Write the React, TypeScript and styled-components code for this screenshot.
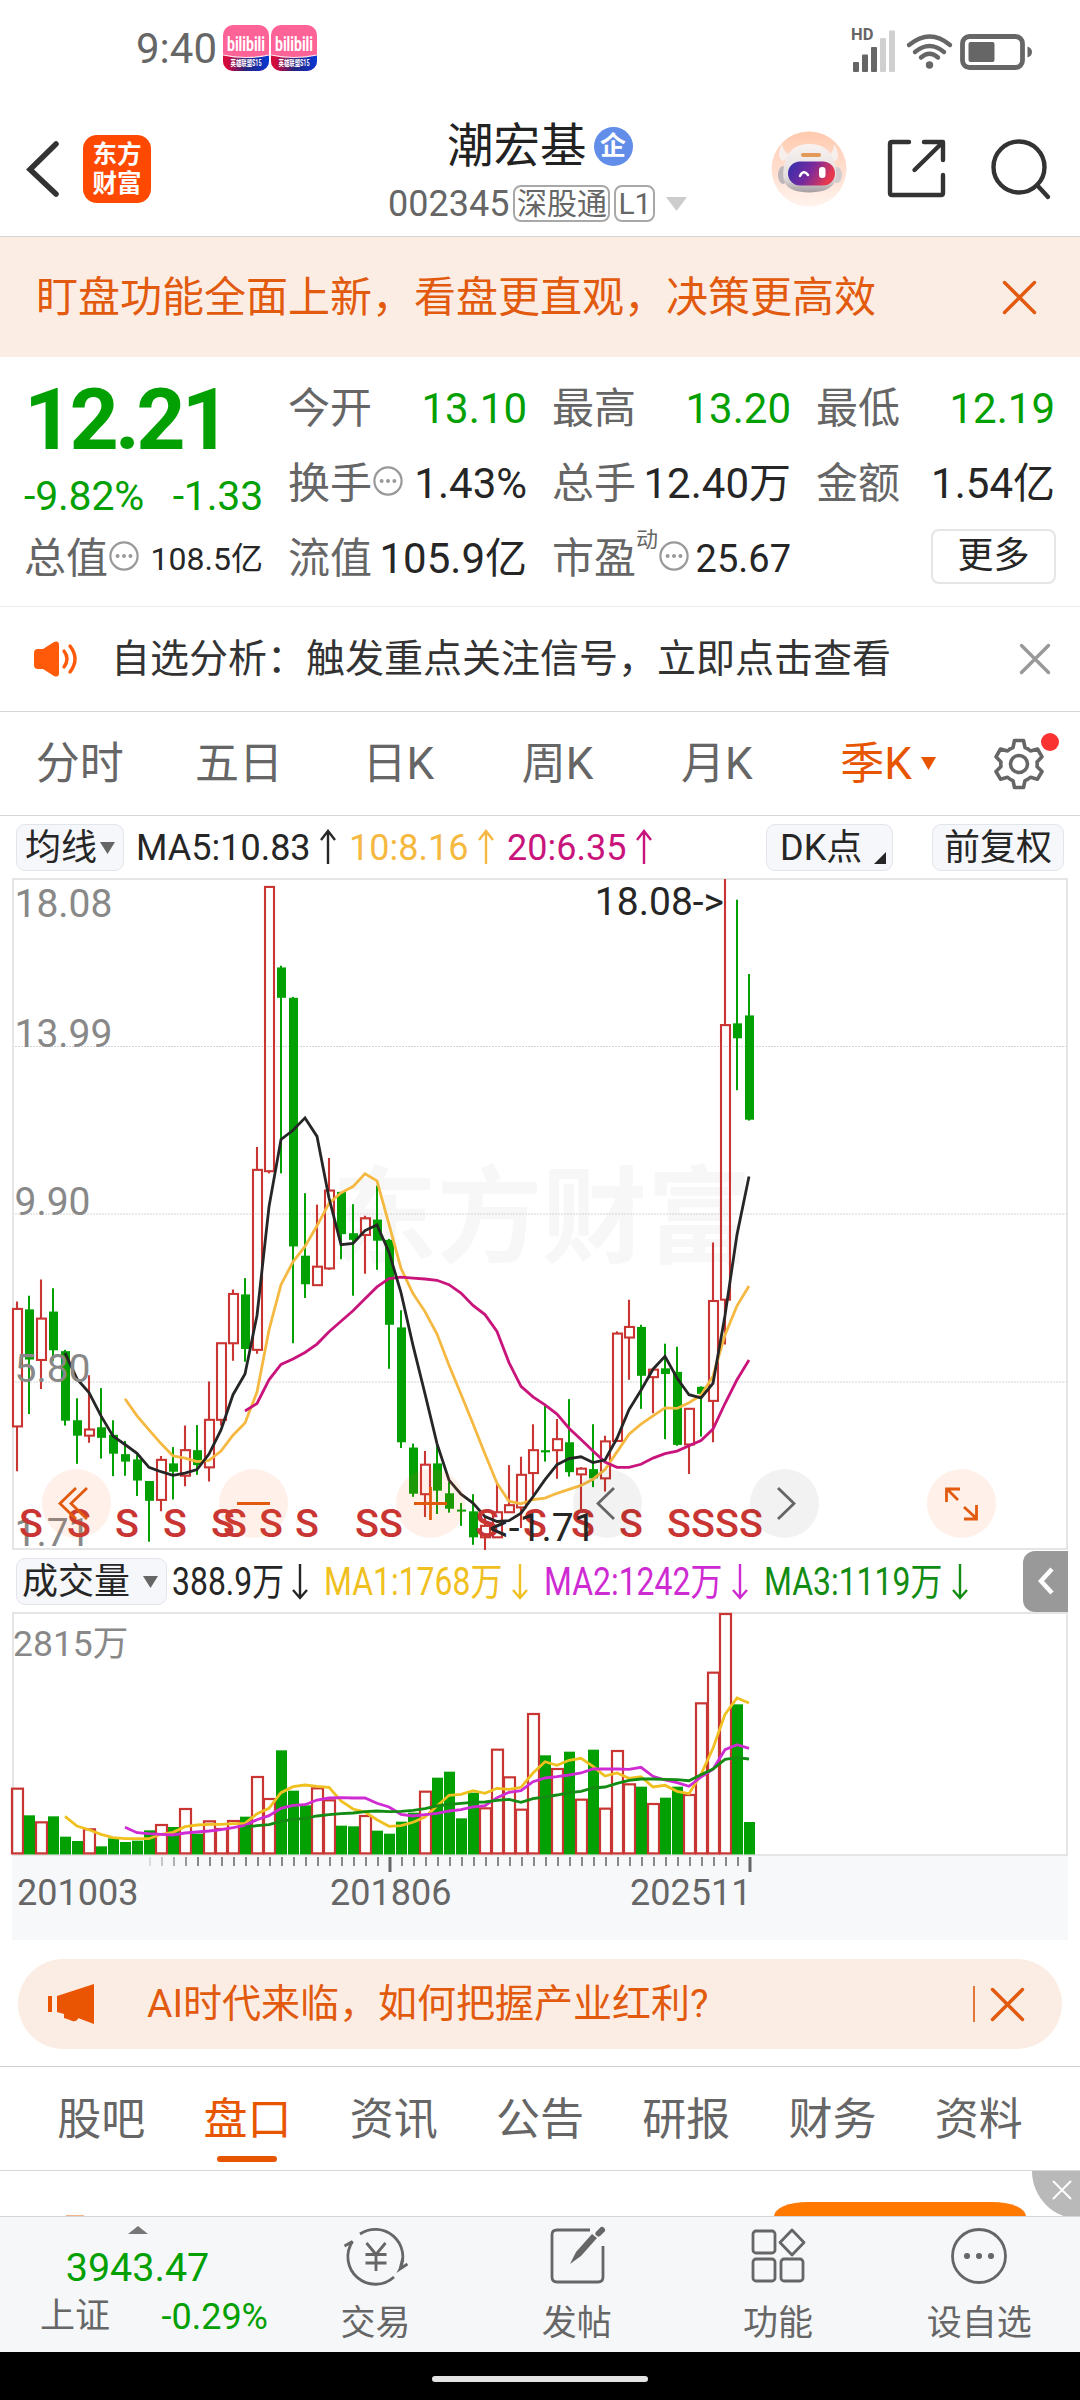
import type { ReactNode } from 'react';
import styled, { createGlobalStyle } from 'styled-components';

const UP = '#c83532';
const DOWN = '#02a002';
const ORANGE = '#e25a0e';

const GlobalStyle = createGlobalStyle`
  * {
    box-sizing: border-box;
  }

  body {
    margin: 0;
    background: #ffffff;
    font-family: Roboto, 'Noto Sans CJK SC', sans-serif;
    line-height: 1;
    color: #222222;
  }

  svg {
    display: block;
    flex-shrink: 0;
    overflow: visible;
  }
`;

type Candle = [dir: 'u' | 'd', high: number, top: number, bottom: number, low: number];

// offsets are chart ticks counted downwards, 20 is the session high
const candles: Candle[] = [
  ['u', 980, 997, 1264, 1366], ['d', 967, 998, 1112, 1236], ['u', 930, 1019, 1113, 1179],
  ['d', 950, 1003, 1091, 1115], ['d', 1090, 1093, 1251, 1262], ['d', 1200, 1250, 1285, 1349],
  ['u', 1148, 1271, 1285, 1301], ['d', 1177, 1266, 1290, 1337], ['d', 1250, 1283, 1326, 1377],
  ['d', 1297, 1327, 1344, 1376], ['d', 1328, 1339, 1387, 1422], ['d', 1388, 1388, 1433, 1526],
  ['u', 1331, 1340, 1431, 1457], ['d', 1311, 1348, 1367, 1430], ['u', 1262, 1318, 1376, 1400],
  ['d', 1261, 1318, 1352, 1374], ['u', 1162, 1249, 1357, 1389], ['u', 1075, 1075, 1249, 1262],
  ['u', 953, 963, 1075, 1115], ['d', 927, 964, 1088, 1117], ['u', 629, 681, 1090, 1099],
  ['u', 38, 38, 684, 689], ['d', 217, 221, 290, 689], ['d', 288, 290, 855, 1075],
  ['d', 734, 876, 941, 972], ['u', 760, 901, 943, 943], ['u', 654, 728, 905, 908],
  ['d', 731, 731, 827, 884], ['d', 759, 825, 840, 967], ['u', 785, 791, 829, 917],
  ['d', 717, 794, 842, 908], ['d', 838, 840, 1033, 1133], ['d', 1000, 1039, 1300, 1313],
  ['d', 1303, 1312, 1417, 1424], ['u', 1320, 1351, 1418, 1470], ['d', 1305, 1348, 1410, 1463],
  ['d', 1390, 1416, 1451, 1460], ['d', 1438, 1453, 1457, 1490], ['d', 1418, 1457, 1516, 1533],
  ['u', 1470, 1490, 1516, 1545], ['u', 1390, 1459, 1516, 1516], ['u', 1352, 1443, 1459, 1459],
  ['u', 1333, 1374, 1448, 1495], ['u', 1259, 1318, 1370, 1420], ['d', 1213, 1318, 1323, 1344],
  ['u', 1247, 1293, 1318, 1383], ['d', 1202, 1300, 1368, 1378], ['u', 1357, 1360, 1373, 1455],
  ['d', 1259, 1361, 1382, 1402], ['u', 1285, 1298, 1382, 1412], ['u', 1048, 1053, 1297, 1297],
  ['u', 976, 1038, 1062, 1158], ['d', 1033, 1038, 1149, 1224], ['u', 1135, 1135, 1152, 1234],
  ['d', 1076, 1132, 1145, 1293], ['d', 1083, 1140, 1306, 1308], ['u', 1224, 1224, 1305, 1372],
  ['d', 1173, 1174, 1190, 1287], ['u', 846, 979, 1206, 1300], ['u', 20, 352, 976, 1078],
  ['d', 67, 348, 382, 500], ['d', 236, 330, 567, 569],
];

const priceAverages = [
  {
    color: '#f5b942', start: 9,
    values: [1201, 1240, 1272, 1303, 1331, 1336, 1344, 1341, 1320, 1284, 1256, 1186, 1045, 942, 890, 855, 808, 757, 733, 719, 690, 706, 805, 905, 962, 1003, 1054, 1125, 1191, 1258, 1327, 1393, 1434, 1440, 1430, 1427, 1416, 1407, 1398, 1384, 1362, 1322, 1282, 1259, 1240, 1222, 1223, 1210, 1193, 1150, 1056, 990, 945],
  },
  {
    color: '#c9147c', start: 19,
    values: [1229, 1212, 1158, 1123, 1111, 1096, 1077, 1049, 1025, 1001, 974, 947, 928, 925, 927, 929, 932, 942, 961, 989, 1010, 1048, 1119, 1173, 1197, 1215, 1236, 1268, 1294, 1320, 1345, 1357, 1357, 1350, 1336, 1326, 1320, 1308, 1296, 1270, 1212, 1158, 1113],
  },
  {
    color: '#262626', start: 4,
    values: [1097, 1156, 1187, 1240, 1286, 1305, 1325, 1357, 1367, 1375, 1370, 1362, 1327, 1272, 1192, 1145, 1012, 765, 612, 591, 563, 605, 745, 851, 848, 819, 806, 868, 960, 1080, 1190, 1303, 1386, 1418, 1438, 1469, 1480, 1478, 1461, 1424, 1385, 1351, 1337, 1333, 1346, 1340, 1291, 1226, 1182, 1134, 1105, 1154, 1192, 1199, 1166, 1012, 828, 696],
  },
];

const volumeTops = [
  745, 825, 846, 828, 889, 902, 867, 918, 894, 905, 901, 870, 854, 860, 806, 880, 843, 866, 842, 829, 710,
  776, 630, 751, 795, 744, 780, 856, 858, 827, 871, 880, 844, 817, 754, 712, 694, 834, 757, 804, 628, 711,
  808, 521, 645, 686, 634, 778, 628, 805, 632, 732, 739, 791, 772, 739, 764, 489, 397, 221, 492, 845,
];

const volumeAverages = [
  {
    color: '#f0c020', start: 4,
    values: [828, 857, 868, 882, 892, 895, 895, 895, 882, 876, 859, 854, 852, 852, 850, 849, 820, 804, 757, 739, 734, 738, 741, 782, 806, 815, 838, 858, 856, 846, 830, 797, 765, 762, 751, 759, 744, 747, 741, 698, 664, 675, 660, 654, 678, 707, 698, 714, 709, 740, 735, 753, 760, 702, 624, 522, 473, 488],
  },
  {
    color: '#cf2bd3', start: 9,
    values: [861, 877, 880, 882, 884, 878, 875, 872, 868, 862, 855, 838, 826, 804, 795, 793, 779, 773, 772, 773, 773, 789, 800, 822, 827, 823, 819, 812, 808, 800, 796, 772, 756, 751, 724, 713, 709, 704, 698, 686, 686, 686, 687, 681, 708, 719, 727, 738, 710, 687, 628, 613, 624],
  },
  {
    color: '#128c12', start: 19,
    values: [860, 856, 853, 843, 837, 834, 827, 823, 820, 818, 814, 812, 814, 813, 810, 805, 797, 792, 789, 786, 785, 780, 777, 786, 775, 770, 764, 757, 753, 743, 740, 729, 720, 716, 716, 717, 718, 721, 703, 686, 657, 652, 656],
  },
];

const sellMarks = [31, 79, 127, 175, 223, 235, 271, 307, 367, 391, 487, 535, 583, 631, 679, 703, 727, 751];

const priceY = (v: number) => (v - 20) / 2.2725 + 1;
const volumeY = (v: number) => (v - 218) / 3 + 1;
const centerX = (i: number) => 5 + i * 12;
const linePath = (start: number, values: number[], y: (v: number) => number) =>
  values.map((v, i) => `${i ? 'L' : 'M'}${centerX(start + i)} ${y(v).toFixed(1)}`).join('');

const volumeFalls = (i: number) => candles[i][0] === 'd' && i !== 57;

function PriceChart() {
  return (
    <svg width="1056" height="672" viewBox="0 0 1056 672">
      <text x="530" y="376" fontSize="105" fontWeight="700" fill="#f7f7f7" textAnchor="middle">
        东方财富
      </text>
      {[168.5, 336, 504].map((y) => (
        <line key={y} x1="0" x2="1056" y1={y} y2={y} stroke="#d4d4d4" strokeWidth="1" strokeDasharray="2 1" />
      ))}
      <rect x="1" y="1" width="1054" height="670" fill="none" stroke="#e3e3e3" strokeWidth="1.8" />
      {candles.map(([dir, high, top, bottom, low], i) => {
        const x = centerX(i);
        const t = priceY(top);
        const b = priceY(bottom);
        if (dir === 'd') {
          return (
            <g key={i} fill={DOWN}>
              <rect x={x - 1} y={priceY(high)} width="2" height={priceY(low) - priceY(high)} />
              <rect x={x - 4} y={t} width="9" height={Math.max(b - t, 2)} />
            </g>
          );
        }
        return (
          <g key={i} fill="none" stroke={UP} strokeWidth="2.1">
            <path d={`M${x} ${priceY(high)}V${t}M${x} ${b}V${priceY(low)}`} />
            <rect x={x - 4} y={t} width="9" height={b - t} />
          </g>
        );
      })}
      {priceAverages.map((ma) => (
        <path key={ma.color} d={linePath(ma.start, ma.values, priceY)} fill="none" stroke={ma.color} strokeWidth="2.8" />
      ))}
      <g fontSize="39" fill="#888888">
        <text x="2.5" y="39">18.08</text>
        <text x="2.5" y="169">13.99</text>
        <text x="2.5" y="336.5">9.90</text>
        <text x="2.5" y="504">5.80</text>
        <text x="2.5" y="668">1.71</text>
      </g>
      <g fontSize="39.5" fontWeight="500" fill={UP} textAnchor="middle">
        {sellMarks.map((x) => (
          <text key={x} x={x - 12} y="659">S</text>
        ))}
      </g>
      <g fontSize="39" fill="#262626">
        <text x="712" y="36.5" textAnchor="end">18.08-&gt;</text>
        <text x="477" y="663">&lt;-1.71</text>
      </g>
    </svg>
  );
}

function VolumeChart() {
  const ticks = Array.from({ length: 51 }, (_, i) => 138 + i * 12);
  return (
    <svg width="1056" height="328" viewBox="0 0 1056 328">
      <rect x="0" y="244" width="1056" height="84" fill="#f7f8fa" />
      <rect x="1" y="1" width="1054" height="242" fill="none" stroke="#e3e3e3" strokeWidth="1.8" />
      {volumeTops.map((top, i) => {
        const y = volumeY(top);
        return volumeFalls(i) ? (
          <rect key={i} x={i * 12} y={y} width="11" height={242.4 - y} fill={DOWN} />
        ) : (
          <rect key={i} x={i * 12} y={y} width="11" height={241.4 - y} fill="none" stroke={UP} strokeWidth="2.2" />
        );
      })}
      {volumeAverages.map((ma) => (
        <path key={ma.color} d={linePath(ma.start, ma.values, volumeY)} fill="none" stroke={ma.color} strokeWidth="2.8" />
      ))}
      {ticks.map((x, i) => {
        const major = x === 378 || x === 738;
        return (
          <rect
            key={x}
            x={major ? x - 1.5 : x - 1}
            y="245"
            width={major ? 3 : 2}
            height={major ? 15 : 9}
            fill={major ? '#666666' : '#888888'}
            opacity={Math.min(1, 0.25 + i * 0.2)}
          />
        );
      })}
      <text x="1" y="44" fontSize="35.5" fill="#888888">2815万</text>
      <g fontSize="36" fill="#666666">
        <text x="5" y="293">201003</text>
        <text x="318" y="293">201806</text>
        <text x="618" y="293">202511</text>
      </g>
    </svg>
  );
}

function CloseIcon({ size, color, stroke = 3.4 }: { size: number; color: string; stroke?: number }) {
  return (
    <svg width={size} height={size} viewBox={`0 0 ${size} ${size}`}>
      <path d={`M1.5 1.5L${size - 1.5} ${size - 1.5}M${size - 1.5} 1.5L1.5 ${size - 1.5}`} stroke={color} strokeWidth={stroke} strokeLinecap="round" />
    </svg>
  );
}

function InfoDots() {
  return (
    <svg width="30" height="30" viewBox="0 0 30 30">
      <circle cx="15" cy="15" r="13.6" fill="none" stroke="#999999" strokeWidth="2.2" />
      <g fill="#999999">
        <circle cx="8.6" cy="15" r="2" />
        <circle cx="15" cy="15" r="2" />
        <circle cx="21.4" cy="15" r="2" />
      </g>
    </svg>
  );
}

function Caret({ width, height, color, up }: { width: number; height: number; color: string; up?: boolean }) {
  return (
    <svg width={width} height={height} viewBox="0 0 10 10" preserveAspectRatio="none">
      <path d={up ? 'M0 10H10L5 0Z' : 'M0 0H10L5 10Z'} fill={color} />
    </svg>
  );
}

function TrendArrow({ down, color }: { down?: boolean; color: string }) {
  return (
    <svg width="18" height="36" viewBox="0 0 18 36">
      <path
        d={down ? 'M9 0V34M2 26L9 34L16 26' : 'M9 34V1M2 10L9 1L16 10'}
        fill="none"
        stroke={color}
        strokeWidth="2.4"
      />
    </svg>
  );
}

function StatusIcons() {
  return (
    <svg width="182" height="48" viewBox="0 0 182 48">
      <text x="1" y="16" fontSize="16.5" fontWeight="700" fill="#666666">HD</text>
      <g fill="#666666">
        <rect x="3" y="38" width="6" height="10" rx="1" />
        <rect x="12" y="30.5" width="6" height="17.5" rx="1" />
        <rect x="21" y="23" width="6" height="25" rx="1" />
      </g>
      <g fill="#d0d0d0">
        <rect x="30" y="14" width="6" height="34" rx="1" />
        <rect x="39" y="6.5" width="6" height="41.5" rx="1" />
      </g>
      <g fill="none" stroke="#666666" strokeWidth="4.4" strokeLinecap="round">
        <path d="M59 21Q80 4 100 21" />
        <path d="M65 28Q79.5 16 94 28" />
        <path d="M71 33.5Q79.5 26 88 33.5" />
      </g>
      <circle cx="79.5" cy="41" r="3.7" fill="#666666" />
      <rect x="112.5" y="12.5" width="60" height="31" rx="7" fill="none" stroke="#666666" strokeWidth="4.8" />
      <rect x="118.5" y="18" width="26" height="20" rx="2" fill="#666666" />
      <path d="M177.5 22.5Q182 24 182 28Q182 32 177.5 33.5Z" fill="#666666" />
    </svg>
  );
}

function RobotAvatar() {
  return (
    <svg width="76" height="76" viewBox="0 0 76 76">
      <defs>
        <linearGradient id="halo" x1="0" y1="0" x2="0" y2="1">
          <stop offset="0" stopColor="#ffc9ae" />
          <stop offset="1" stopColor="#fff3ed" />
        </linearGradient>
        <linearGradient id="visor" x1="0" y1="0" x2="1" y2="0.3">
          <stop offset="0" stopColor="#2f2fb0" />
          <stop offset="0.55" stopColor="#7a2a9c" />
          <stop offset="1" stopColor="#e8384f" />
        </linearGradient>
        <linearGradient id="shell" x1="0" y1="0" x2="0" y2="1">
          <stop offset="0" stopColor="#f8f3f1" />
          <stop offset="0.7" stopColor="#e3dddd" />
          <stop offset="1" stopColor="#a59da1" />
        </linearGradient>
      </defs>
      <circle cx="38" cy="38" r="37.5" fill="url(#halo)" />
      <path d="M11 13Q5 24 11 30L22 26Q13 23 11 13ZM63 13Q70 24 65 30L54 26Q63 23 63 13Z" fill="#f7efec" />
      <ellipse cx="12" cy="44" rx="5" ry="9" fill="#bdb6ba" />
      <ellipse cx="66" cy="44" rx="5" ry="8" fill="#d3cccf" />
      <path d="M38 13C52 13 61 19 64 34C68 51 63 61 38 61.5C14 61 10 51 13 35C15 20 25 13 38 13Z" fill="url(#shell)" />
      <rect x="30" y="22" width="20" height="4" rx="2" fill="#e39a58" />
      <rect x="17" y="30.5" width="47" height="24" rx="12" fill="url(#visor)" />
      <path d="M29 45Q32.5 38 37 44" fill="none" stroke="#ffffff" strokeWidth="2.5" strokeLinecap="round" />
      <rect x="48" y="36" width="6.5" height="11" rx="3" fill="#ffffff" />
    </svg>
  );
}

function VideoAppIcon({ id }: { id: string }) {
  return (
    <svg width="46" height="46" viewBox="0 0 46 46">
      <defs>
        <linearGradient id={id} x1="0" x2="1">
          <stop offset="0.1" stopColor="#d30a3c" />
          <stop offset="0.5" stopColor="#27247c" />
          <stop offset="1" stopColor="#0638d6" />
        </linearGradient>
      </defs>
      <rect width="46" height="46" rx="10" fill="#fd6397" />
      <path d="M0 30Q23 35 46 30V36A10 10 0 0 1 36 46H10A10 10 0 0 1 0 36Z" fill={`url(#${id})`} />
      <path d="M0 30Q23 35 46 30" fill="none" stroke="#ffe1ec" strokeWidth="1.2" />
      <text x="23" y="26" fontSize="20" fontWeight="700" fill="#ffffff" textAnchor="middle" textLength="38" lengthAdjust="spacingAndGlyphs">
        bilibili
      </text>
      <text x="23" y="41" fontSize="8.5" fontWeight="700" fill="#ffffff" textAnchor="middle" textLength="31" lengthAdjust="spacingAndGlyphs">
        英雄联盟S15
      </text>
    </svg>
  );
}

function GearIcon() {
  return (
    <svg width="52" height="52" viewBox="0 0 52 52" fill="none" stroke="#666666" strokeWidth="3.6" strokeLinejoin="round">
      <path d="M21.5 2.5H30.5L32 9.5Q35 10.7 37.5 13L44.5 11L49 18.8L44 24Q44.4 26 44 28.5L49 33.5L44.5 41.2L37.5 39.2Q35 41.5 32 42.6L30.5 49.5H21.5L20 42.6Q17 41.5 14.5 39.2L7.5 41.2L3 33.5L8 28.5Q7.6 26 8 24L3 18.8L7.5 11L14.5 13Q17 10.7 20 9.5Z" />
      <circle cx="26" cy="26" r="8.5" />
    </svg>
  );
}

const navItems: { label: string; icon: ReactNode }[] = [
  {
    label: '交易',
    icon: (
      <>
        <path d="M15 8A27.5 27.5 0 0 1 55 43L62.5 38M55 43L57.5 33" />
        <path d="M49 51A27.5 27.5 0 0 1 7.5 15.5L-0.5 20" />
        <path d="M21.5 17L31 28.5L40.5 17M20.5 28.5H41.5M20.5 37H41.5M31 28V45" />
      </>
    ),
  },
  {
    label: '发帖',
    icon: (
      <>
        <path d="M44 4H11Q6 4 6 9V51Q6 56 11 56H52Q57 56 57 51V20" />
        <path d="M24 38L30 26L46 8L51 12L35 30Z" fill="#666666" stroke="none" />
        <path d="M52.5 7.5L56 4" strokeWidth="6" strokeLinecap="round" />
      </>
    ),
  },
  {
    label: '功能',
    icon: (
      <>
        <rect x="6" y="5" width="22" height="22" rx="3" />
        <rect x="6" y="33" width="22" height="22" rx="3" />
        <rect x="34" y="33" width="22" height="22" rx="3" />
        <path d="M45 4L57 16.5L45 29L33 16.5Z" strokeLinejoin="round" />
      </>
    ),
  },
  {
    label: '设自选',
    icon: (
      <>
        <circle cx="31" cy="30" r="26.5" />
        <path d="M19 30H19.01M31 30H31.01M43 30H43.01" strokeWidth="6" strokeLinecap="round" />
      </>
    ),
  },
];

const periods = ['分时', '五日', '日K', '周K', '月K'];
const sections = ['股吧', '盘口', '资讯', '公告', '研报', '财务', '资料'];

export default function App() {
  return (
    <Screen>
      <GlobalStyle />
      <StatusBar>
        <Clock>9:40</Clock>
        <VideoAppIcon id="notice-a" />
        <VideoAppIcon id="notice-b" />
        <Spacer />
        <StatusIcons />
      </StatusBar>

      <Header>
        <HeaderSide>
          <svg width="34" height="58" viewBox="0 0 34 58">
            <path d="M31 4L5 29.5L31 54" fill="none" stroke="#333333" strokeWidth="5.5" strokeLinecap="round" />
          </svg>
          <BrandLogo>
            <span>东方</span>
            <span>财富</span>
          </BrandLogo>
        </HeaderSide>
        <StockTitle>
          <StockName>
            潮宏基
            <CompanyBadge>企</CompanyBadge>
          </StockName>
          <StockCode>
            002345
            <Tag $width={97}>深股通</Tag>
            <Tag $width={41}>L1</Tag>
            <Caret width={21} height={14} color="#cccccc" />
          </StockCode>
        </StockTitle>
        <HeaderActions>
          <RobotAvatar />
          <svg width="62" height="62" viewBox="0 0 62 62" fill="none" stroke="#333333" strokeWidth="4.4" strokeLinecap="round" strokeLinejoin="round">
            <path d="M23 4H6Q4 4 4 6V55Q4 57 6 57H55Q57 57 57 55V37" />
            <path d="M38 4H57V22M56 5L28.5 32" />
          </svg>
          <SearchButton>
            <svg width="62" height="62" viewBox="0 0 62 62" fill="none" stroke="#333333" strokeWidth="4.4" strokeLinecap="round">
              <circle cx="29" cy="29" r="25.5" />
              <path d="M47 47L58 59" />
            </svg>
          </SearchButton>
        </HeaderActions>
      </Header>

      <Promo>
        <span>盯盘功能全面上新，看盘更直观，决策更高效</span>
        <CloseIcon size={33} color={ORANGE} />
      </Promo>

      <Quote>
        <PriceBlock>
          <LastPrice>12.21</LastPrice>
          <Change>
            <span>-9.82%</span>
            <span>-1.33</span>
          </Change>
        </PriceBlock>
        <Stat>
          今开<Value $color={DOWN}>13.10</Value>
        </Stat>
        <Stat>
          最高<Value $color={DOWN}>13.20</Value>
        </Stat>
        <Stat>
          最低<Value $color={DOWN}>12.19</Value>
        </Stat>
        <Stat>
          换手<InfoDots />
          <Value>1.43%</Value>
        </Stat>
        <Stat>
          总手<Value>12.40万</Value>
        </Stat>
        <Stat>
          金额<Value>1.54亿</Value>
        </Stat>
        <Stat>
          总值<InfoDots />
          <Value $size={32}>108.5亿</Value>
        </Stat>
        <Stat>
          流值<Value>105.9亿</Value>
        </Stat>
        <Stat>
          市盈<Sup>动</Sup>
          <InfoDots />
          <Value $size={38}>25.67</Value>
        </Stat>
        <Stat>
          <MoreButton>更多</MoreButton>
        </Stat>
      </Quote>

      <Alert>
        <svg width="44" height="36" viewBox="0 0 44 36">
          <path d="M4 8H9L20 1Q25 -1 25 4V32Q25 37 20 35L9 28H4Q0 28 0 24V12Q0 8 4 8Z" fill="#ff5a0a" />
          <path d="M30 10Q36 18 30 26M36 5Q46 18 36 31" fill="none" stroke="#ff5a0a" strokeWidth="3.4" strokeLinecap="round" />
        </svg>
        <span>自选分析：触发重点关注信号，立即点击查看</span>
        <CloseIcon size={30} color="#999999" />
      </Alert>

      <PeriodTabs>
        {periods.map((label) => (
          <PeriodTab key={label}>{label}</PeriodTab>
        ))}
        <PeriodTab $active>
          季K
          <PeriodCaret>
            <Caret width={15} height={13} color="#e85500" />
          </PeriodCaret>
        </PeriodTab>
        <Settings>
          <GearIcon />
          <NewDot />
        </Settings>
      </PeriodTabs>

      <IndicatorBar>
        <Chip $width={108} $inset={8}>
          均线
          <Caret width={15} height={12} color="#666666" />
        </Chip>
        <Averages>
          <Average $color="#262626">MA5:10.83<TrendArrow color="#262626" /></Average>
          <Average $color="#f5b942">10:8.16<TrendArrow color="#f5b942" /></Average>
          <Average $color="#c9147c">20:6.35<TrendArrow color="#c9147c" /></Average>
        </Averages>
        <Chip $width={127} $inset={13} $corner>DK点</Chip>
        <Chip $width={132} $inset={11}>前复权</Chip>
      </IndicatorBar>

      <ChartArea>
        <PriceChart />
        <ChartControls>
          <RoundButton>
            <path d="M34 19L18 34.5L34 50M45 19L29 34.5L45 50" />
          </RoundButton>
          <RoundButton>
            <path d="M18 34.5H51" />
          </RoundButton>
          <RoundButton>
            <path d="M18 34.5H51M34.5 18V51" />
          </RoundButton>
          <RoundButton gray>
            <path d="M41 19L25 34.5L41 50" />
          </RoundButton>
          <RoundButton gray>
            <path d="M28 19L44 34.5L28 50" />
          </RoundButton>
          <RoundButton>
            <path d="M19.5 33V20H33M20 20L31 31M37 38L49 49M37 50H49.5V36" />
          </RoundButton>
        </ChartControls>
      </ChartArea>

      <VolumeBar>
        <Chip $width={151} $inset={5} $gap={13}>
          成交量
          <Caret width={15} height={12} color="#666666" />
        </Chip>
        <VolumeValue $color="#262626" $width={119}><b>388.9万</b><TrendArrow down color="#262626" /></VolumeValue>
        <VolumeValue $color="#f0c020" $width={187}><b>MA1:1768万</b><TrendArrow down color="#f0c020" /></VolumeValue>
        <VolumeValue $color="#cf2bd3" $width={187}><b>MA2:1242万</b><TrendArrow down color="#cf2bd3" /></VolumeValue>
        <VolumeValue $color="#128c12" $width={187}><b>MA3:1119万</b><TrendArrow down color="#128c12" /></VolumeValue>
        <Collapse>
          <svg width="18" height="30" viewBox="0 0 18 30">
            <path d="M15 3L4 15L15 27" fill="none" stroke="#ffffff" strokeWidth="4.5" />
          </svg>
        </Collapse>
      </VolumeBar>
      <ChartArea>
        <VolumeChart />
      </ChartArea>

      <TopicBanner>
        <svg width="46" height="40" viewBox="0 0 46 40" fill="#ea5504">
          <rect x="0" y="12" width="4" height="16" />
          <path d="M9 12L46 0V40L30 34V35Q27 39 22 36L16 34V30L9 28Z" />
        </svg>
        <span>AI时代来临，如何把握产业红利?</span>
        <TopicDivider />
        <CloseIcon size={33} color={ORANGE} />
      </TopicBanner>

      <SectionTabs>
        {sections.map((label) => (
          <SectionTab key={label} $active={label === '盘口'}>
            {label}
          </SectionTab>
        ))}
      </SectionTabs>

      <AdStrip>
        <AdMark />
        <AdButton />
        <AdClose>
          <CloseIcon size={20} color="#ffffff" stroke={2} />
        </AdClose>
      </AdStrip>

      <BottomNav>
        <IndexQuote>
          <Caret width={20} height={8} color="#777777" up />
          <IndexValue>3943.47</IndexValue>
          <IndexRow>
            <span>上证</span>
            <IndexChange>-0.29%</IndexChange>
          </IndexRow>
        </IndexQuote>
        {navItems.map((item) => (
          <NavItem key={item.label}>
            <svg width="62" height="60" viewBox="0 0 62 60" fill="none" stroke="#666666" strokeWidth="2.8">
              {item.icon}
            </svg>
            {item.label}
          </NavItem>
        ))}
      </BottomNav>
      <GestureBar />
    </Screen>
  );
}

function RoundButton({ gray, children }: { gray?: boolean; children: ReactNode }) {
  return (
    <Round $gray={gray}>
      <svg width="69" height="69" viewBox="0 0 69 69" fill="none" stroke={gray ? '#666666' : ORANGE} strokeWidth="2.8">
        {children}
      </svg>
    </Round>
  );
}

const Screen = styled.main`
  width: 1080px;
  height: 2400px;
  overflow: hidden;
  display: flex;
  flex-direction: column;

  > * {
    flex-shrink: 0;
  }
`;

const Spacer = styled.div`
  flex: 1;
`;

const StatusBar = styled.div`
  height: 96px;
  padding: 0 48px 0 136px;
  display: flex;
  align-items: center;
  gap: 2px;
`;

const Clock = styled.span`
  width: 85px;
  font-size: 42px;
  color: #666666;
  padding-top: 2px;
`;

const Header = styled.header`
  height: 141px;
  padding: 0 28px 0 25px;
  border-bottom: 1px solid #d6d6d6;
  display: grid;
  grid-template-columns: 363px 1fr 310px;
`;

const HeaderSide = styled.div`
  display: flex;
  align-items: center;
  gap: 24px;
  padding-top: 6px;
`;

const BrandLogo = styled.div`
  width: 68px;
  height: 68px;
  border-radius: 14px;
  background: #ff4800;
  color: #ffffff;
  font-size: 24.5px;
  font-weight: 700;
  line-height: 29px;
  padding-top: 5px;
  display: flex;
  flex-direction: column;
  align-items: center;
`;

const StockTitle = styled.div`
  padding-top: 26px;
  color: #222222;
`;

const StockName = styled.div`
  display: flex;
  align-items: center;
  padding-left: 59px;
  gap: 7px;
  height: 48px;
  font-size: 46.5px;
  white-space: nowrap;
`;

const CompanyBadge = styled.span`
  width: 39px;
  height: 39px;
  border-radius: 50%;
  background: #628de8;
  color: #ffffff;
  font-size: 26px;
  font-weight: 700;
  display: flex;
  align-items: center;
  justify-content: center;
`;

const StockCode = styled.div`
  display: flex;
  align-items: center;
  margin-top: 15px;
  font-size: 36px;
  color: #666666;
  white-space: nowrap;

  svg {
    margin-left: 11px;
  }
`;

const Tag = styled.span<{ $width: number }>`
  width: ${({ $width }) => $width}px;
  height: 37px;
  margin-left: 4px;
  border: 2px solid #a8a8a8;
  border-radius: 8px;
  font-size: 30px;
  display: flex;
  align-items: center;
  justify-content: center;
`;

const HeaderActions = styled.div`
  display: flex;
  align-items: center;
  justify-content: flex-end;
  gap: 39px;
  padding-top: 6px;
`;

const SearchButton = styled.div`
  margin-left: 3px;
`;

const Promo = styled.div`
  height: 120px;
  padding: 1px 44px 0 36px;
  background: #fcede4;
  display: flex;
  align-items: center;
  justify-content: space-between;
  font-size: 42px;
  color: ${ORANGE};

  span {
    padding-top: 1px;
  }
`;

const Quote = styled.section`
  height: 250px;
  padding: 14px 24px 0 24px;
  border-bottom: 1px solid #ebebeb;
  display: grid;
  grid-template-columns: repeat(4, 239px);
  grid-auto-rows: 75px;
  column-gap: 25px;
`;

const PriceBlock = styled.div`
  grid-row: span 2;
  color: ${DOWN};
`;

const LastPrice = styled.div`
  padding-top: 6px;
  font-size: 86px;
  font-weight: 700;
  letter-spacing: -3.8px;
`;

const Change = styled.div`
  margin-top: 13px;
  display: flex;
  justify-content: space-between;
  font-size: 41px;
  letter-spacing: -0.2px;
`;

const Stat = styled.div`
  display: flex;
  align-items: center;
  font-size: 42px;
  color: #666666;
  white-space: nowrap;

  svg {
    margin: -5px 0 0 1px;
  }
`;

const Value = styled.span<{ $color?: string; $size?: number }>`
  margin-left: auto;
  font-size: ${({ $size = 42 }) => $size}px;
  color: ${({ $color = '#262626' }) => $color};
`;

const Sup = styled.span`
  align-self: flex-start;
  margin-top: 8px;
  font-size: 22px;
`;

const MoreButton = styled.div`
  width: 125px;
  height: 55px;
  margin: -4px -1px 0 auto;
  padding-bottom: 1px;
  border: 2px solid #e5e5e5;
  border-radius: 8px;
  display: flex;
  align-items: center;
  justify-content: center;
  font-size: 36px;
  color: #262626;
`;

const Alert = styled.div`
  height: 105px;
  padding: 0 30px 0 34px;
  border-bottom: 1px solid #d6d6d6;
  display: flex;
  align-items: center;
  font-size: 39px;
  color: #333333;

  span {
    margin: 0 auto 0 33px;
  }
`;

const PeriodTabs = styled.nav`
  height: 104px;
  border-bottom: 1px solid #d6d6d6;
  display: flex;
  align-items: center;
`;

const PeriodTab = styled.div<{ $active?: boolean }>`
  position: relative;
  width: 159.3px;
  padding-top: 1px;
  display: flex;
  justify-content: center;
  font-size: 44px;
  color: ${({ $active }) => ($active ? '#e85500' : '#666666')};
`;

const PeriodCaret = styled.span`
  position: absolute;
  right: 20px;
  top: 16px;
`;

const Settings = styled.div`
  position: relative;
  margin-left: 37px;
`;

const NewDot = styled.span`
  position: absolute;
  top: -5px;
  right: -14px;
  width: 18px;
  height: 18px;
  border-radius: 50%;
  background: #fa3232;
`;

const IndicatorBar = styled.div`
  height: 62px;
  padding: 0 16px;
  display: flex;
  align-items: center;
  font-size: 36px;
`;

const Chip = styled.div<{ $width: number; $inset: number; $gap?: number; $corner?: boolean }>`
  position: relative;
  width: ${({ $width }) => $width}px;
  height: 47px;
  padding: 2px 0 0 ${({ $inset }) => $inset}px;
  border: 1.5px solid #e2e5ea;
  border-radius: 9px;
  background: #f6f7fa;
  display: flex;
  align-items: center;
  gap: ${({ $gap = 3 }) => $gap}px;
  font-size: 36px;
  color: #262626;
  white-space: nowrap;

  & + & {
    margin-left: 39px;
  }

  &::after {
    content: '';
    display: ${({ $corner }) => ($corner ? 'block' : 'none')};
    position: absolute;
    right: 6px;
    bottom: 6px;
    border-left: 12px solid transparent;
    border-bottom: 12px solid #262626;
  }
`;

const Averages = styled.div`
  flex: 1;
  display: flex;
  gap: 12px;
  padding: 2px 0 0 12px;
`;

const Average = styled.span<{ $color: string }>`
  display: flex;
  align-items: center;
  gap: 8.5px;
  color: ${({ $color }) => $color};
`;

const ChartArea = styled.div`
  position: relative;
  padding: 0 12px;
`;

const ChartControls = styled.div`
  position: absolute;
  left: 42px;
  bottom: 12px;
  display: flex;
  gap: 108px;
`;

const Round = styled.div<{ $gray?: boolean }>`
  width: 69px;
  height: 69px;
  border-radius: 50%;
  background: ${({ $gray }) => ($gray ? 'rgba(0, 0, 0, 0.05)' : 'rgba(255, 110, 40, 0.1)')};
`;

const VolumeBar = styled.div`
  height: 62px;
  padding: 0 12px 0 16px;
  display: flex;
  align-items: center;
`;

const VolumeValue = styled.span<{ $color: string; $width: number }>`
  display: flex;
  align-items: center;
  margin-left: 5px;
  padding-top: 1px;
  font-size: 38px;
  color: ${({ $color }) => $color};
  white-space: nowrap;

  & + & {
    margin-left: 15px;
  }

  b {
    width: ${({ $width }) => $width}px;
    padding-top: 1px;
    font-weight: 400;
    transform: scaleX(0.84);
    transform-origin: left;
  }
`;

const Collapse = styled.div`
  width: 45px;
  height: 61px;
  margin-left: auto;
  border-radius: 12px 0 0 12px;
  background: #999999;
  display: flex;
  align-items: center;
  padding-left: 14px;
`;

const TopicBanner = styled.div`
  height: 90px;
  margin: 19px 18px 17px;
  padding: 0 38px 0 30px;
  border-radius: 45px;
  background: #fcede4;
  display: flex;
  align-items: center;
  font-size: 39px;
  color: ${ORANGE};

  span {
    margin: 0 auto 0 53px;
  }
`;

const TopicDivider = styled.i`
  width: 2px;
  height: 36px;
  margin-right: 16px;
  background: #e0763c;
`;

const SectionTabs = styled.nav`
  height: 105px;
  padding: 0 28px;
  border-top: 1px solid #d0d0d0;
  border-bottom: 1px solid #d6d6d6;
  display: flex;
`;

const SectionTab = styled.div<{ $active: boolean }>`
  flex: 1;
  display: flex;
  flex-direction: column;
  align-items: center;
  padding-top: 31px;
  font-size: 44px;
  color: ${({ $active }) => ($active ? '#e85500' : '#666666')};

  &::after {
    content: '';
    width: 60px;
    height: 6px;
    margin-top: 14px;
    border-radius: 3px;
    background: ${({ $active }) => ($active ? '#e85500' : 'transparent')};
  }
`;

const AdStrip = styled.div`
  position: relative;
  height: 45px;
  padding: 0 54px 0 66px;
  display: flex;
  align-items: flex-end;
  justify-content: space-between;
  overflow: hidden;
`;

const AdMark = styled.div`
  width: 18px;
  height: 1px;
  background: #f3b48a;
`;

const AdButton = styled.div`
  width: 252px;
  height: 14px;
  border-radius: 34px 34px 0 0 / 14px 14px 0 0;
  background: #ff7800;
`;

const AdClose = styled.div`
  position: absolute;
  top: -48px;
  right: -48px;
  width: 96px;
  height: 96px;
  padding: 57px 0 0 20px;
  border-radius: 50%;
  background: #b9b9b9;
`;

const BottomNav = styled.footer`
  height: 136px;
  border-top: 1px solid #d6d6d6;
  background: #f6f7f9;
  display: grid;
  grid-template-columns: 275px repeat(4, 1fr);
`;

const IndexQuote = styled.div`
  display: flex;
  flex-direction: column;
  align-items: center;
  padding-top: 9px;
`;

const IndexValue = styled.div`
  margin-top: 14px;
  font-size: 39.5px;
  color: ${DOWN};
`;

const IndexRow = styled.div`
  width: 228px;
  margin: 11px 0 0 33px;
  display: flex;
  align-items: center;
  justify-content: space-between;
  font-size: 35px;
  color: #666666;
`;

const IndexChange = styled.span`
  font-size: 36px;
  color: ${DOWN};
`;

const NavItem = styled.div`
  display: flex;
  flex-direction: column;
  align-items: center;
  gap: 20px;
  padding-top: 9px;
  font-size: 35px;
  color: #666666;
`;

const GestureBar = styled.div`
  height: 48px;
  background: #000000;
  display: flex;
  justify-content: center;
  padding-top: 24px;

  &::after {
    content: '';
    width: 216px;
    height: 6px;
    border-radius: 3px;
    background: #e4e4e4;
  }
`;
